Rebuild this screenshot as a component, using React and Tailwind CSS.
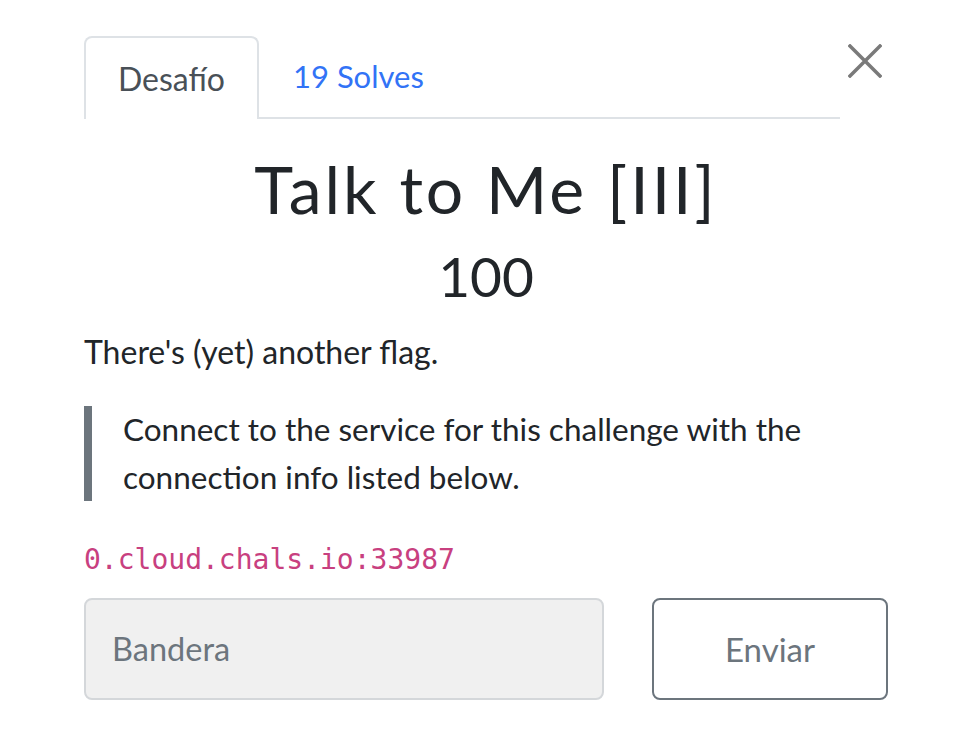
import React from 'react';

export default function App() {
  return (
    <div className="min-h-screen w-[972px] bg-white text-[#212529] font-['Lato',sans-serif]">
      <div className="pl-[84px] pt-[36px] w-[888px]">
        {/* Tabs + close */}
        <div className="flex items-start">
          <ul className="flex w-[756px] border-b-2 border-[#dee2e6]">
            <li className="-mb-[2px] border-2 border-b-0 border-[#dee2e6] rounded-t-[8px] bg-white px-[32px] pt-[15px] pb-[15px] text-[32px] leading-[51px] text-[#495057]">
              Desafío
            </li>
            <li className="px-[34px] pt-[15px] pb-[15px] text-[31px] leading-[51px] text-[#3273f6]">
              19 Solves
            </li>
          </ul>
          <button className="ml-auto mt-[8px] mr-[6px] w-[34px] h-[34px] flex items-center justify-center">
            <svg width="34" height="34" viewBox="0 0 34 34" fill="none" stroke="#7a7a7a" strokeWidth="3.5" strokeLinecap="square">
              <path d="M2 2 L32 32 M32 2 L2 32" />
            </svg>
          </button>
        </div>

        {/* Title */}
        <h3 className="mt-[30px] text-center text-[66px] leading-[1.2] tracking-[0.045em] font-normal">
          Talk to Me [III]
        </h3>
        <h4 className="mt-[15px] text-center text-[55px] leading-[1.2] font-normal">100</h4>

        {/* Description */}
        <p className="mt-[16px] text-[32px] leading-[54px]">There's (yet) another flag.</p>
        <blockquote className="mt-[27px] border-l-[8px] border-[#6c757d] pl-[31px] text-[31.5px] leading-[47.6px]">
          Connect to the service for this challenge with the connection info listed below.
        </blockquote>
        <div className="mt-[41px] font-['DejaVu_Sans_Mono',monospace] text-[28px] leading-[35px] text-[#c8407f]">
          0.cloud.chals.io:33987
        </div>

        {/* Submit row */}
        <div className="mt-[21px] flex items-stretch gap-[48px]">
          <div className="w-[520px] h-[102px] rounded-[8px] border-2 border-[#d4d7da] bg-[#f0f0f0] flex items-center pl-[26px] text-[32.5px] text-[#6c757d]">
            Bandera
          </div>
          <button className="w-[236px] h-[102px] rounded-[8px] border-2 border-[#6c757d] bg-white flex items-center justify-center text-[33px] text-[#6c757d]">
            Enviar
          </button>
        </div>
      </div>
    </div>
  );
}
